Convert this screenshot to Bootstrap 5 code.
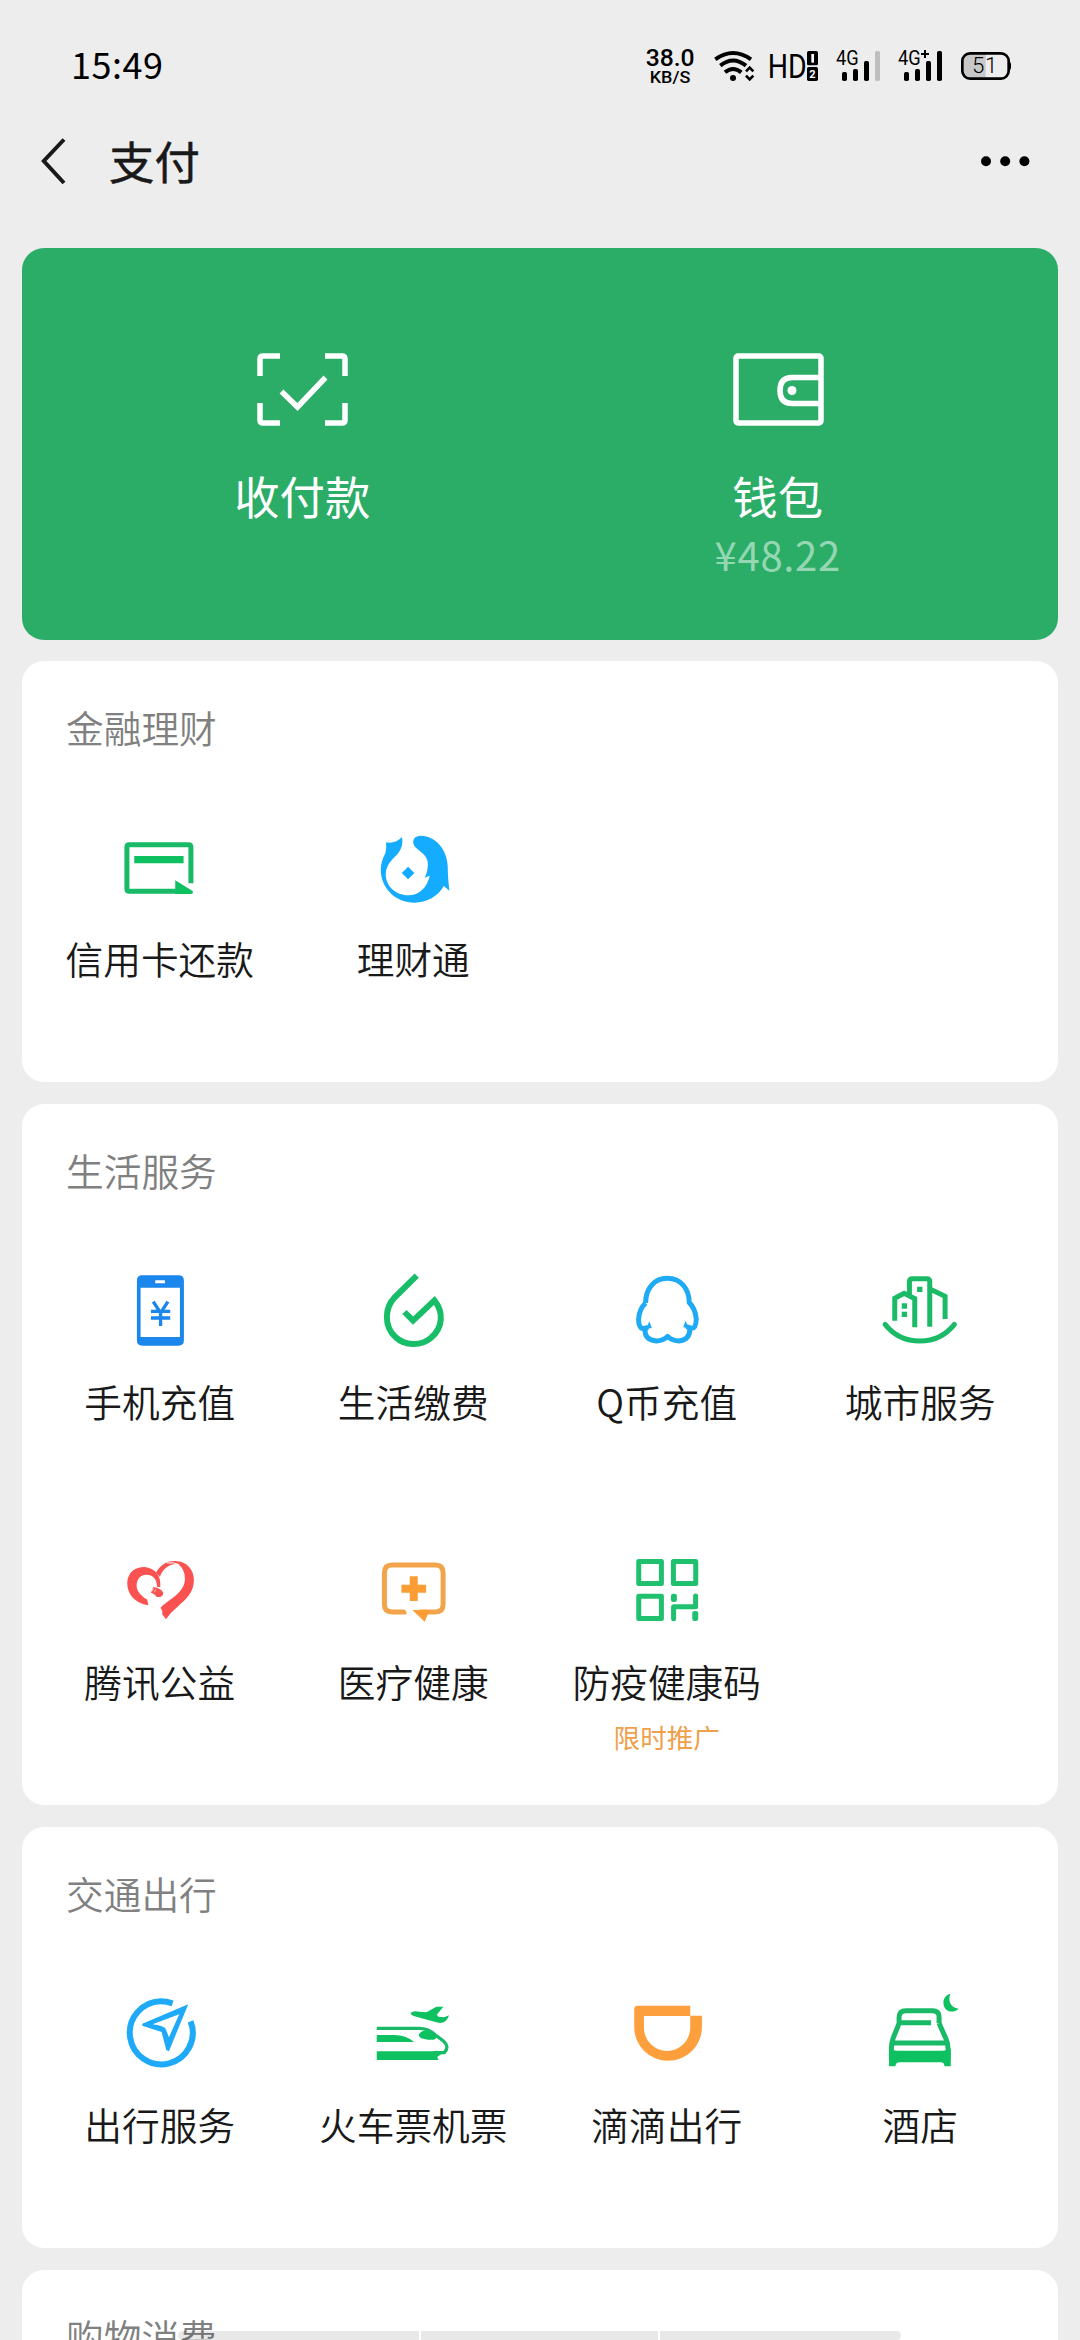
<!DOCTYPE html>
<html lang="zh-CN">
<head>
<meta charset="utf-8">
<meta name="viewport" content="width=device-width, initial-scale=1">
<title>支付</title>
<link href="https://cdn.jsdelivr.net/npm/bootstrap@5.3.0/dist/css/bootstrap.min.css" rel="stylesheet">
<script src="https://cdn.jsdelivr.net/npm/bootstrap@5.3.0/dist/js/bootstrap.bundle.min.js"></script>
<style>
  body { background: #ededed; color: #191919; font-family: "Noto Sans CJK SC", sans-serif; }
  .screen { width: 1080px; height: 2340px; }
  .statusbar { height: 106px; padding: 30px 40px 0 71px; color: #000; }
  .clock { font-size: 36px; line-height: 67px; letter-spacing: .5px; font-weight: 400; }
  .topbar { height: 142px; padding: 24px 50px 0 41px; }
  .topbar h1 { font-size: 45.4px; line-height: 61px; font-weight: 400; -webkit-text-stroke: .5px #191919; margin-left: 42px; }
  .panel { border: 0; border-radius: 22px; margin: 0 22px 22px; }
  .hero { background: #2bad67; color: #fff; height: 392px; padding: 88px 42.5px 0; margin-bottom: 21px; }
  .hero-label { font-size: 45.4px; line-height: 60px; margin-top: 39px; font-weight: 400; }
  .hero-sum { font-size: 40px; line-height: 50px; letter-spacing: .7px; margin-top: 4px; color: #95d6b3; font-weight: 400; }
  .group { padding: 0 11px; height: 421px; }
  .group-tall { height: 701px; }
  .group-title { font-size: 37.7px; line-height: 56px; margin: 38px 33px 48px; color: #808080; font-weight: 350; }
  .tile { height: 280px; padding-top: 22px; }
  .tile svg { width: 84px; height: 84px; }
  .tile-label { font-size: 37.7px; line-height: 56px; margin-top: 21px; white-space: nowrap; font-weight: 350; }
  .tile-note { font-size: 26.6px; line-height: 36px; margin-top: 10px; color: #f0a04b; }
  .gestures { width: 723px; height: 9px; margin-left: 178px; }
  .gestures div { background: rgba(0,0,0,.09); }
</style>
</head>
<body>
<div class="screen position-relative overflow-hidden">
  <header>
    <div class="statusbar d-flex justify-content-between">
      <div class="clock">15:49</div>
      <svg width="420" height="70" viewBox="0 0 1260 210" class="me-n1" fill="#000" font-family="Roboto, sans-serif">
        <text x="77" y="107" font-size="70" font-weight="500" textLength="147" lengthAdjust="spacingAndGlyphs">38.0</text>
        <text x="89" y="158" font-size="51" font-weight="500" textLength="122" lengthAdjust="spacingAndGlyphs">KB/S</text>
        <g fill="none" stroke="#000" stroke-width="12">
          <path d="M286 88Q339 50 393 88M301 107Q339 76 378 107M315 127Q339 107 364 127"/>
          <path d="M378 124l11-11 11 11M378 137l11 11 11-11" stroke-width="8"/>
        </g>
        <circle cx="339" cy="144" r="9"/>
        <text x="443" y="144" font-size="101" textLength="117" lengthAdjust="spacingAndGlyphs" font-weight="400">HD</text>
        <rect x="561" y="63" width="33" height="43" rx="5"/><rect x="561" y="111" width="33" height="42" rx="5"/>
        <path d="M574 72h8v26h-8z" fill="#fff"/>
        <text x="568" y="145" font-size="33" font-weight="700" fill="#fff">2</text>
        <text x="648" y="106" font-size="59" textLength="68" lengthAdjust="spacingAndGlyphs">4G</text>
        <rect x="666" y="126" width="15" height="27" rx="5"/><rect x="699" y="117" width="15" height="36" rx="5"/><rect x="732" y="93" width="15" height="60" rx="5"/><rect x="765" y="63" width="15" height="90" rx="5" fill="#bebebe"/>
        <text x="834" y="106" font-size="59" textLength="68" lengthAdjust="spacingAndGlyphs">4G</text>
        <path d="M903 69h9v-9h6v9h9v6h-9v9h-6v-9h-9z"/>
        <rect x="852" y="126" width="15" height="27" rx="5"/><rect x="885" y="117" width="15" height="36" rx="5"/><rect x="918" y="93" width="15" height="60" rx="5"/><rect x="951" y="63" width="15" height="90" rx="5"/>
        <path d="M1097 71h-46q-24 0-24 24v27q0 24 24 24h46z" fill="#c8c8c8"/>
        <rect x="1027" y="70" width="139" height="76" rx="23" fill="none" stroke="#000" stroke-width="8"/>
        <path d="M1167 94q6 3 6 9v10q0 6-6 9z"/>
        <text x="1056" y="130" font-size="67" font-weight="300" textLength="76">51</text>
      </svg>
    </div>
    <nav class="topbar d-flex align-items-start">
      <svg width="26" height="64" viewBox="0 0 26 64" fill="none" stroke="#191919" stroke-width="4"><path d="M23 9.500L2.800 31 23 53"/></svg>
      <h1 class="mb-0">支付</h1>
      <svg class="ms-auto" width="50" height="64" viewBox="0 0 50 64"><circle cx="6" cy="31.300" r="5"/><circle cx="25.200" cy="31.300" r="5"/><circle cx="44.400" cy="31.300" r="5"/></svg>
    </nav>
  </header>

  <main>
    <section class="card panel hero">
      <div class="row g-0 text-center">
        <div class="col-6 d-flex flex-column align-items-center pt-3">
          <svg width="92" height="74" viewBox="0 0 92 74" fill="none" stroke="#fff" stroke-width="5.500"><path d="M24 4H7Q4 4 4 7v17M69 4h17q3 0 3 3v17M24 71H7q-3 0-3-3V51M69 71h17q3 0 3-3V51M25.500 39.500l16 15.500 28-29.500"/></svg>
          <div class="hero-label">收付款</div>
        </div>
        <div class="col-6 d-flex flex-column align-items-center pt-3">
          <svg width="92" height="74" viewBox="0 0 92 74" fill="none" stroke="#fff" stroke-width="5.500"><rect x="4" y="4" width="85" height="67" rx="2"/><path d="M89 25.500H60q-12 0-12 13t12 13h29"/><circle cx="60" cy="38.500" r="4.500" fill="#fff" stroke="none"/></svg>
          <div class="hero-label">钱包</div>
          <div class="hero-sum">¥48.22</div>
        </div>
      </div>
    </section>

    <section class="card panel group">
      <h2 class="group-title">金融理财</h2>
      <div class="row row-cols-4 g-0 text-center">
        <div class="col tile">
          <svg viewBox="203.250 405 252 252"><path d="M422 580V471q0-7-7-7H237q-7 0-7 7v126q0 7 7 7h150" fill="none" stroke="#18b967" stroke-width="15"/><path d="M252 498h148v22H252zM375 571l52 32q4 9-6 9h-46z" fill="#0dc160"/></svg>
          <div class="tile-label">信用卡还款</div>
        </div>
        <div class="col tile">
          <svg viewBox="963.750 405 252 252" fill="#15acff"><path d="M1009 457Q1037 462 1057 441Q1062 471 1043 493C1024 512 1009 526 1008 553C1008 589 1038 616 1075 616C1109 616 1133 591 1140 557L1125 563Q1136 540 1134 517C1132 498 1117 489 1103 477C1083 462 1087 438 1112 437C1161 438 1193 482 1194 530Q1194 561 1199 602L1182 588C1165 619 1131 638 1094 638C1038 638 994 596 993 540Q993 515 1007 489Q1011 474 1009 457Z"/><path d="M1075 530l19 19-19 19-19-19z"/></svg>
          <div class="tile-label">理财通</div>
        </div>
      </div>
    </section>

    <section class="card panel group group-tall">
      <h2 class="group-title">生活服务</h2>
      <div class="row row-cols-4 g-0 text-center">
        <div class="col tile">
          <svg viewBox="203.250 384 252 252" fill="#1b86ec"><path fill-rule="evenodd" d="M276 406h109q16 0 16 16v179q0 16-16 16H276q-16 0-16-16V422q0-16 16-16zM271 443v148h118V443zM315 421v9h29v-9z"/><path d="M309 485l22 34 22-34M302 514h58M302 534h58M331 516v42" fill="none" stroke="#1b86ec" stroke-width="10"/></svg>
          <div class="tile-label">手机充值</div>
        </div>
        <div class="col tile">
          <svg viewBox="963.750 384 252 252" fill="none" stroke="#18bd67" stroke-width="18"><path d="M1101 407L1036 471C1003 504 1003 560 1037 591C1065 618 1114 619 1144 593C1179 564 1183 517 1154 481L1090 542L1064 516"/></svg>
          <div class="tile-label">生活缴费</div>
        </div>
        <div class="col tile">
          <svg viewBox="224.250 54 252 252" fill="none" stroke="#1eaaf5" stroke-width="15" stroke-linejoin="round"><path d="M286 159C286 118 310 85 351 85C393 85 417 118 417 158Q435 175 438 207Q437 235 425 235L408 230M286 159Q267 177 265 208Q265 233 277 236L294 232M285 236Q280 269 319 273Q341 271 352 259Q363 271 386 273Q419 269 419 236"/><path d="M297 214l8 20-22 4q11-9 14-24zM406 212l-7 20 22 4q-11-9-15-24z" fill="#1eaaf5" stroke="none"/></svg>
          <div class="tile-label">Q币充值</div>
        </div>
        <div class="col tile">
          <svg viewBox="984.750 54 252 252" fill="none" stroke="#1aba67" stroke-width="15"><path d="M1035 212V145L1063 130L1095 146V232M1079 133V95q0-9 9-9h43q9 0 9 9v135M1142 118L1186 139V207"/><path d="M1006 223Q1046 273 1110 273Q1174 273 1214 223" stroke-linecap="round"/><path d="M1102 110h16v16h-16zM1056 160h16v16h-16zM1056 185h16v16h-16z" fill="#1aba67" stroke="none"/></svg>
          <div class="tile-label">城市服务</div>
        </div>
        <div class="col tile">
          <svg viewBox="203.250 54 252 252" fill="#fa5151"><path d="M294 226C254 220 231 193 231 160C231 124 260 110 283 111C314 114 334 137 330 172L320 170C321 147 307 133 286 134C267 136 256 152 260 175Q265 195 291 209Z"/><path d="M317 128C333 101 353 92 376 93C411 95 431 119 431 151C431 185 410 206 382 230Q360 248 347 268L336 253V243L331 233C352 211 403 190 404 148Q404 112 381 102C360 101 338 114 329 140Q323 134 317 128Z"/><path d="M350 99Q370 96 387 104" fill="none" stroke="#fff" stroke-width="3"/><path d="M309 171q23 3 30 17 0 15-20 13-2-7-17-13z"/><path d="M309 175l-4 9M316 178l-4 9" stroke="#fff" stroke-width="2"/></svg>
          <div class="tile-label">腾讯公益</div>
        </div>
        <div class="col tile">
          <svg viewBox="963.750 54 252 252"><path d="M1070 246h-43q-23 0-23-23v-95q0-23 23-23h130q23 0 23 23v95q0 23-23 23h-48" fill="none" stroke="#f2a44b" stroke-width="15"/><path d="M1080 139h24v25h25v24h-25v25h-24v-25h-25v-24h25zM1088 240h55l-10 15-8 20z" fill="#fc9c35"/><path d="M1063 237l18 19h8l-15-19z" fill="#fff"/></svg>
          <div class="tile-label">医疗健康</div>
        </div>
        <div class="col tile">
          <svg viewBox="254.250 54 252 252" fill="none" stroke="#1fc16f" stroke-width="15" stroke-linejoin="round"><path d="M295.500 94.500h68v66h-68zM399.500 94.500h67v66h-67zM295.500 198.500h68v67h-68z"/><path d="M400 266v-36h66v-32" stroke-linecap="round"/><rect x="392" y="191" width="18" height="25" rx="7" fill="#1fc16f" stroke="none"/><rect x="456" y="243" width="18" height="30" rx="7" fill="#1fc16f" stroke="none"/></svg>
          <div class="tile-label">防疫健康码</div>
          <div class="tile-note">限时推广</div>
        </div>
      </div>
    </section>

    <section class="card panel group">
      <h2 class="group-title">交通出行</h2>
      <div class="row row-cols-4 g-0 text-center">
        <div class="col tile">
          <svg viewBox="203.250 393 252 252" fill="none" stroke="#1eaaf8" stroke-width="18"><path d="M367 430Q349 424 331 424A94.500 94.500 0 1 0 421 484"/><path fill="#1eaaf8" stroke="none" fill-rule="evenodd" d="M414 433L356 574L348 570L334 516L276 497V491ZM387 463L307 493Q339 497 346 506L356 532Z"/></svg>
          <div class="tile-label">出行服务</div>
        </div>
        <div class="col tile">
          <svg viewBox="963.750 393 252 252" fill="#0dc160"><path d="M981 505H1105Q1136 504 1158 526L1181 543Q1201 561 1183 578H1152" fill="none" stroke="#18b967" stroke-width="10"/><path d="M981 525H1030Q1068 524 1093 546H981ZM981 574H1186Q1174 584 1162 591L1167 600H981ZM1107 526Q1109 512 1137 511L1161 530Q1158 542 1135 539Q1109 537 1107 526ZM1082 459Q1091 451 1108 455L1130 457L1160 440H1181L1161 464L1166 470L1183 472L1198 466Q1192 487 1172 489Q1162 488 1154 485L1094 469Q1085 468 1082 459Z"/></svg>
          <div class="tile-label">火车票机票</div>
        </div>
        <div class="col tile">
          <svg viewBox="194.250 63 252 252" fill="#fc9f3c"><path fill-rule="evenodd" d="M232 107H390V137H425V171A101.500 101.500 0 0 1 222 171V117Q222 107 232 107ZM251 138V172A69.500 71 0 0 0 390 172V138Z"/></svg>
          <div class="tile-label">滴滴出行</div>
        </div>
        <div class="col tile">
          <svg viewBox="954.750 63 252 252" fill="none" stroke="#18b967" stroke-width="15"><path d="M1138 160V140Q1138 122 1118 122H1039Q1018 122 1018 142V160L1000 205Q995 219 995 236V270M1138 160L1158 205Q1165 220 1165 238V270M1018 158H1114M1002 219H1157"/><path d="M988 236Q1000 242 1012 242H1148Q1161 242 1173 236V289H1154Q1154 277 1143 277H1019Q1008 277 1007 289H988ZM1172 71C1164 90 1171 113 1197 116C1178 133 1151 124 1151 98C1151 84 1159 75 1172 71Z" fill="#0dc160" stroke="none"/></svg>
          <div class="tile-label">酒店</div>
        </div>
      </div>
    </section>

    <section class="card panel group">
      <h2 class="group-title">购物消费</h2>
    </section>
  </main>

  <!-- gesture hints over the bottom edge -->
  <div class="gestures position-absolute bottom-0 start-0 row g-0 row-cols-3">
    <div class="col rounded-start-pill"></div>
    <div class="col border-start border-end border-2 border-white"></div>
    <div class="col rounded-end-pill"></div>
  </div>
</div>
</body>
</html>
